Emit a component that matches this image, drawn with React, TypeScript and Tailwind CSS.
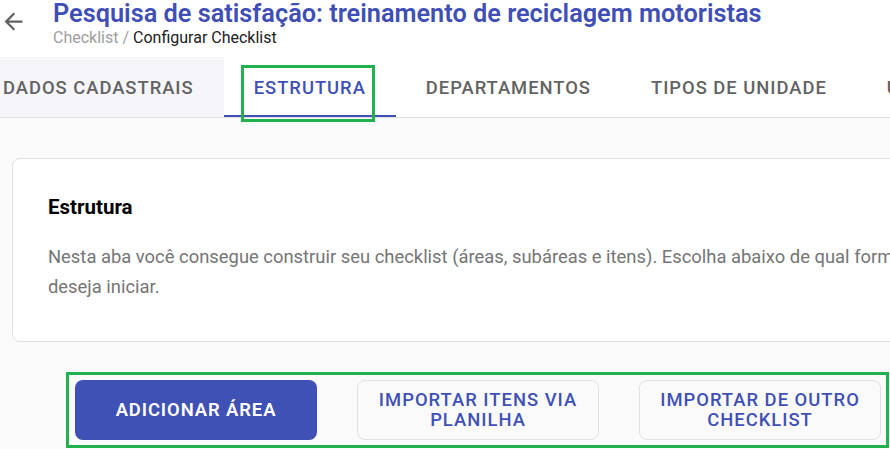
const tabs = ["DADOS CADASTRAIS", "ESTRUTURA", "DEPARTAMENTOS", "TIPOS DE UNIDADE", "USUÁRIOS"];

export default function App() {
  return (
    <div className="relative w-[890px] h-[449px] overflow-hidden bg-[#fafafa] font-['Roboto',sans-serif]">
      {/* header */}
      <div className="flex h-[57px] bg-white">
        <div className="w-[53px] pt-[8px]">
          <svg viewBox="0 0 24 24" className="w-[27px] h-[27px] fill-[#616161]">
            <path d="M20 11H7.83l5.59-5.59L12 4l-8 8 8 8 1.41-1.41L7.83 13H20v-2z" />
          </svg>
        </div>
        <div className="flex flex-col whitespace-nowrap">
          <h1 className="text-[25.3px] leading-[27px] font-semibold text-[#3f4fb5]">
            Pesquisa de satisfação: treinamento de reciclagem motoristas
          </h1>
          <div className="text-[16px] leading-[20px] mt-[1px]">
            <span className="text-[#9e9e9e]">Checklist / </span>
            <span className="text-[#212121]">Configurar Checklist</span>
          </div>
        </div>
      </div>

      {/* tabs */}
      <div className="h-[61px] bg-white border-b border-[#e0e0e0]">
        <div className="flex -ml-[27px] whitespace-nowrap">
          {tabs.map((t, i) => (
            <div
              key={t}
              className={
                "h-[60px] px-[30px] pt-[3px] flex items-center text-[18.4px] font-medium tracking-[0.053em] border-b-2 " +
                (i === 0 ? "bg-[#f5f5fa] border-transparent text-[#636363]" : "") +
                (i === 1 ? "border-[#3f51b5] text-[#3f51b5]" : "") +
                (i > 1 ? "border-transparent text-[#636363]" : "")
              }
            >
              {t}
            </div>
          ))}
        </div>
      </div>

      {/* content */}
      <div className="pl-[12px] pt-[40px]">
        <div className="w-[1000px] h-[184px] bg-white border border-[#e0e0e0] rounded-[8px] pl-[35px] pt-[36px]">
          <h2 className="text-[20.5px] leading-[24px] font-bold text-black">Estrutura</h2>
          <p className="mt-[23px] w-[920px] text-[18.4px] leading-[30px] text-[#757575]">
            Nesta aba você consegue construir seu checklist (áreas, subáreas e itens). Escolha abaixo de qual forma você
            deseja iniciar.
          </p>
        </div>

        <div className="flex gap-[40px] pl-[63px] mt-[38px]">
          <button className="w-[242px] h-[60px] rounded-[8px] bg-[#3f51b5] text-white text-[18.4px] font-semibold tracking-[0.05em]">
            ADICIONAR ÁREA
          </button>
          <button className="w-[242px] h-[60px] rounded-[8px] bg-[#fafafa] border border-[#e0e0e0] text-[#3f51b5] text-[18.4px] leading-[20px] font-medium tracking-[0.055em] px-[12px]">
            IMPORTAR ITENS VIA PLANILHA
          </button>
          <button className="w-[242px] h-[60px] rounded-[8px] bg-[#fafafa] border border-[#e0e0e0] text-[#3f51b5] text-[18.4px] leading-[20px] font-medium tracking-[0.055em] px-[12px]">
            IMPORTAR DE OUTRO CHECKLIST
          </button>
        </div>
      </div>

      {/* annotation boxes */}
      <div className="absolute left-[241px] top-[65px] w-[134px] h-[57px] border-[3px] border-[#22b14c]" />
      <div className="absolute left-[66px] top-[372px] w-[823px] h-[76px] border-[3px] border-[#22b14c]" />
    </div>
  );
}
